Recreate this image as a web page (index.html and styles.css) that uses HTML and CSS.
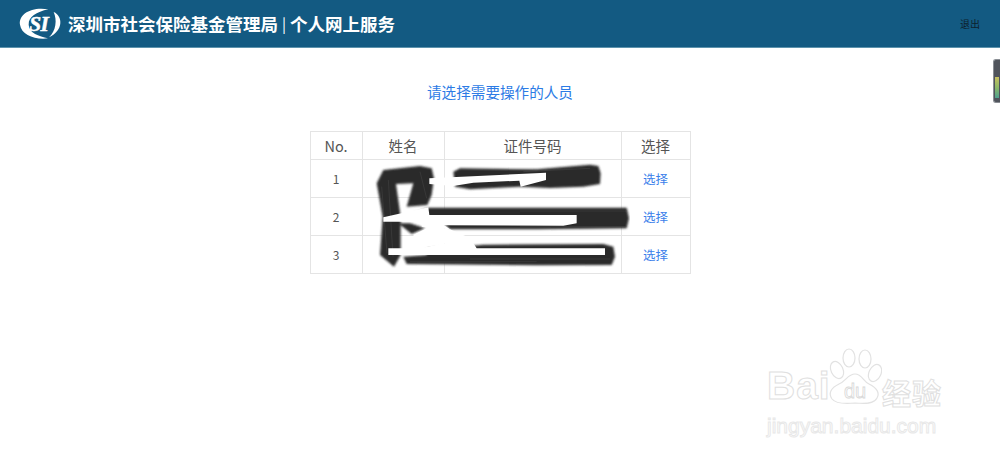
FILE: index.html
```html
<!DOCTYPE html>
<html lang="zh-CN">
<head>
<meta charset="utf-8">
<title>个人网上服务</title>
<link rel="stylesheet" href="styles.css">
</head>
<body>
<header class="topbar">
  <div class="brand">
    <svg class="logo" viewBox="0 0 150 108" aria-hidden="true">
      <path fill="#fff" d="M100 10C50 1 10 24 15 56c4 30 44 46 84 41C72 90 42 82 41 56 40 33 64 18 100 10z"/>
      <path fill="#fff" d="M116 18c28 12 30 56-14 76 21-19 25-52 14-76z"/>
      <text class="logo-letters" x="43" y="76">SI</text>
    </svg>
    <span class="brand-text">深圳市社会保险基金管理局</span>
    <span class="brand-sep">|</span>
    <span class="brand-text">个人网上服务</span>
  </div>
  <a class="logout">退出</a>
</header>

<main class="content">
  <h1 class="prompt">请选择需要操作的人员</h1>
  <div class="table-wrap">
    <table class="people">
      <colgroup>
        <col class="c-no"><col class="c-name"><col class="c-id"><col class="c-act">
      </colgroup>
      <thead>
        <tr><th>No.</th><th>姓名</th><th>证件号码</th><th>选择</th></tr>
      </thead>
      <tbody>
        <tr><td>1</td><td></td><td></td><td><a class="pick">选择</a></td></tr>
        <tr><td>2</td><td></td><td></td><td><a class="pick">选择</a></td></tr>
        <tr><td>3</td><td></td><td></td><td><a class="pick">选择</a></td></tr>
      </tbody>
    </table>
    <svg class="scribble" viewBox="0 0 780 345" aria-hidden="true">
      <defs>
        <filter id="soft"><feGaussianBlur stdDeviation="3.5"/></filter>
      </defs>
      <g fill="#2a2a2a" filter="url(#soft)">
        <polygon points="20,70 40,30 150,18 185,25 192,55 185,105 172,135 110,140 130,70 78,72 92,170 92,285 72,320 30,285 38,170"/>
        <polygon points="85,190 120,190 165,205 125,222"/>
        <polygon points="250,35 270,25 500,28 660,14 685,18 692,40 690,72 640,80 540,84 450,80 300,88 255,80"/>
        <polygon points="115,165 175,143 600,143 770,143 777,175 770,205 500,208 240,208 220,190"/>
        <polygon points="170,262 300,258 340,254 700,252 730,260 735,290 725,315 500,316 110,312 100,290 170,285"/>
      </g>
      <g fill="none" stroke="#5a5a5a" stroke-width="1.5" opacity="0.6">
        <path d="M35 80l16 200M55 60l14 230M150 35l20 80"/>
        <path d="M460 35L660 25M450 153H770M450 200H770M300 297H720M120 305H500"/>
      </g>
      <g fill="#fff">
        <polygon points="178,55 528,38 528,60 452,80 448,62 310,68 250,78 178,72"/>
        <polygon points="40,172 175,142 178,165 620,165 620,190 580,197 222,196 240,208 155,200 155,185 40,185"/>
        <polygon points="55,265 150,265 300,234 320,265 705,265 705,285 55,285"/>
        <polygon points="170,205 240,208 300,234 150,265 130,225"/>
      </g>
    </svg>
  </div>
</main>

<aside class="meter" aria-hidden="true"><span class="meter-bar"></span></aside>

<div class="watermark" aria-hidden="true">
  <div class="wm-main">
    <span class="wm-bai">Bai</span>
    <svg class="wm-paw" viewBox="0 0 54 60">
      <g fill="#fff" stroke="#e2e2e2" stroke-width="1.2">
        <ellipse cx="9" cy="22" rx="6" ry="9" transform="rotate(-25 9 22)"/>
        <ellipse cx="21" cy="10" rx="6" ry="9"/>
        <ellipse cx="37" cy="11" rx="6" ry="9"/>
        <ellipse cx="47" cy="25" rx="6" ry="9" transform="rotate(25 47 25)"/>
        <path d="M27 26c7 0 8 7 14 10 8 4 11 9 8 14-3 6-12 6-22 5-10 1-19 1-23-4-4-6-1-11 7-15 7-3 9-10 16-10z"/>
      </g>
      <text class="wm-du" x="27" y="50" text-anchor="middle">du</text>
    </svg>
    <span class="wm-cn">经验</span>
  </div>
  <div class="wm-url">jingyan.baidu.com</div>
</div>
</body>
</html>
```

FILE: styles.css
```css
* { box-sizing: border-box; }

html, body { height: 100%; }

body {
  margin: 0;
  position: relative;
  overflow: hidden;
  background: #fff;
  font-family: "Noto Sans CJK SC", "Liberation Sans", sans-serif;
  color: #555;
}

.topbar {
  height: 48px;
  background: #135a82;
  border-bottom: 1px solid #5d93ad;
  display: flex;
  align-items: center;
  justify-content: space-between;
  padding: 0 20px 0 15px;
}

.brand {
  display: flex;
  align-items: center;
  color: #fff;
}

.logo {
  width: 50px;
  height: 36px;
  margin-right: 3px;
}

.logo-letters {
  font-family: "Liberation Serif", serif;
  font-size: 64px;
  font-weight: 700;
  font-style: italic;
  fill: #fff;
  stroke: #fff;
  stroke-width: 1.5;
  letter-spacing: -2px;
}

.brand-text {
  font-size: 17.5px;
  font-weight: 700;
  line-height: 24px;
  white-space: nowrap;
}

.brand-sep {
  font-size: 15px;
  font-weight: 400;
  margin: 0 4px 0 4px;
}

.logout {
  font-size: 10px;
  color: #0d1f2c;
}

.content {
  display: flex;
  flex-direction: column;
  align-items: center;
}

.prompt {
  margin: 33px 0 28px;
  font-size: 14.6px;
  font-weight: 400;
  line-height: 22px;
  color: #2c7be5;
}

.table-wrap {
  position: relative;
}

.people {
  width: 380px;
  table-layout: fixed;
  border-collapse: collapse;
  font-size: 12px;
}

.c-no { width: 52px; }
.c-name { width: 82px; }
.c-id { width: 177px; }
.c-act { width: 69px; }

.people th,
.people td {
  border: 1px solid #e4e4e4;
  text-align: center;
  padding: 0;
}

.people th {
  height: 28px;
  font-size: 14.5px;
  font-weight: 400;
  color: #555;
}

.people td {
  height: 38px;
}

.pick {
  font-size: 12.5px;
  color: #3a80ea;
}

.scribble {
  position: absolute;
  left: 60px;
  top: 29px;
  width: 260px;
  height: 115px;
}

.meter {
  position: absolute;
  right: 0;
  top: 59px;
  width: 7px;
  height: 44px;
  background: #50545c;
  border: 1px solid #8a8e94;
  border-right: 0;
  border-radius: 3px 0 0 3px;
  padding-top: 17px;
  padding-left: 1px;
}

.meter-bar {
  display: block;
  width: 4px;
  height: 21px;
  background: linear-gradient(#c8c060, #8cb868 50%, #4fa090);
}

.watermark {
  position: absolute;
  left: 767px;
  top: 350px;
  width: 180px;
  color: #fff;
}

.wm-main {
  display: flex;
  align-items: flex-end;
  height: 58px;
}

.wm-bai {
  font-family: "Liberation Sans", sans-serif;
  font-size: 39px;
  font-weight: 700;
  line-height: 44px;
  letter-spacing: 1px;
  width: 61px;
  -webkit-text-stroke: 1px #e0e0e0;
}

.wm-paw {
  width: 54px;
  height: 60px;
  flex: none;
}

.wm-du {
  font-family: "Liberation Sans", sans-serif;
  font-size: 20px;
  fill: #fff;
  stroke: #d8d8d8;
  stroke-width: 0.8;
}

.wm-cn {
  font-size: 29px;
  font-weight: 700;
  line-height: 32px;
  white-space: nowrap;
  letter-spacing: 1px;
  -webkit-text-stroke: 1px #e0e0e0;
}

.wm-url {
  margin-top: 6px;
  font-family: "Liberation Sans", sans-serif;
  font-size: 21px;
  line-height: 24px;
  white-space: nowrap;
  -webkit-text-stroke: 1px #e8e8e8;
}
```
